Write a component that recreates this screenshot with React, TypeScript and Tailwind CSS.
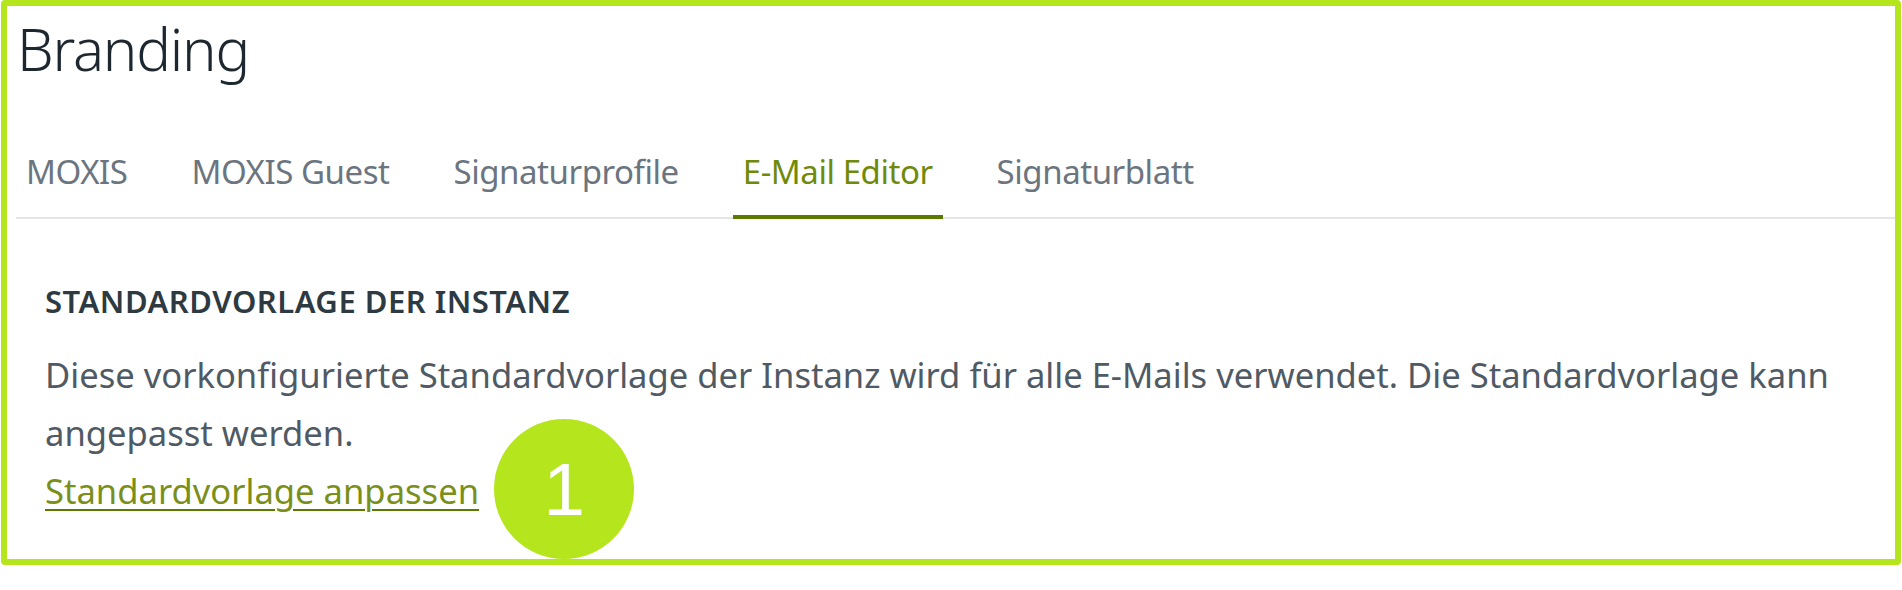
import React from "react";

const tabs = ["MOXIS", "MOXIS Guest", "Signaturprofile", "E-Mail Editor", "Signaturblatt"];

export default function App() {
  return (
    <div className="w-[1902px] h-[590px] bg-white font-['Noto_Sans','Open_Sans',sans-serif]">
      <div className="relative ml-[1px] w-[1900px] h-[565px] border-[6px] border-[#b5e61d] rounded-[4px] box-border">
        <div className="pl-[10px] pt-[14px]">
          <h1 className="text-[58px] leading-none font-light tracking-[-1.2px] text-[#1d2730]">Branding</h1>
        </div>
        <div className="ml-[9px] mt-[77px] flex gap-[44px] border-b-2 border-[#e3e5e6]">
          {tabs.map((t) => {
            const active = t === "E-Mail Editor";
            return (
              <div
                key={t}
                className={
                  active
                    ? "-mb-[2px] px-[10px] pb-[27px] border-b-4 border-[#5b7a00] text-[33px] leading-none tracking-[-0.45px] text-[#6f8a0a]"
                    : "-mb-[2px] px-[10px] pb-[27px] border-b-4 border-transparent text-[33px] leading-none tracking-[-0.45px] text-[#6b7580]"
                }
              >
                {t}
              </div>
            );
          })}
        </div>
        <div className="pl-[38px] pt-[67px]">
          <h2 className="text-[31px] leading-none font-semibold tracking-[0.5px] text-[#2e3a42]">STANDARDVORLAGE DER INSTANZ</h2>
          <p className="mt-[29px] text-[34.6px] leading-[58px] text-[#4f5a64]">
            Diese vorkonfigurierte Standardvorlage der Instanz wird für alle E-Mails verwendet. Die Standardvorlage kann angepasst werden.
          </p>
          <div className="text-[34.6px] leading-[58px]">
            <a className="text-[#7a8f1a] underline decoration-[#5b7a00] decoration-2 underline-offset-[5px]">
              Standardvorlage anpassen
            </a>
          </div>
        </div>
        <div className="absolute left-[487px] top-[413px] z-10 w-[140px] h-[140px] rounded-full bg-[#b5e61d] flex items-center justify-center">
          <span className="font-['Liberation_Sans',Arial,sans-serif] text-[75px] leading-none text-white">1</span>
        </div>
      </div>
    </div>
  );
}
